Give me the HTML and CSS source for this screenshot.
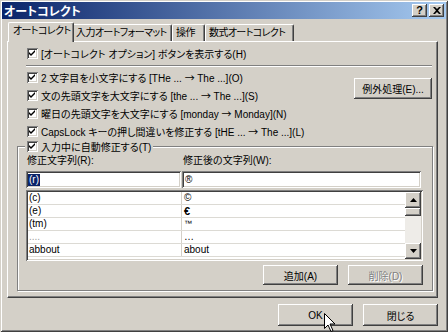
FILE: index.html
```html
<!DOCTYPE html>
<html lang="ja">
<head>
  <meta charset="UTF-8">
  <title>オートコレクト</title>
  <link rel="stylesheet" href="styles.css">
</head>
<body>
<div class="window">
  <div class="titlebar">
    <span class="title">オートコレクト</span>
    <div class="tb-btns">
      <span class="tb-btn help">?</span>
      <span class="tb-btn close">
        <svg width="8" height="7" viewBox="0 0 8 7"><path d="M0 0h2l2 2 2-2h2L5 3.5 8 7H6L4 5 2 7H0l3-3.5z" fill="#000"/></svg>
      </span>
    </div>
  </div>

  <div class="content">
    <div class="tabs">
      <div class="tab active t1">オートコレクト</div>
      <div class="tab t2">入力オートフォーマット</div>
      <div class="tab t3">操作</div>
      <div class="tab t4">数式オートコレクト</div>
    </div>

    <div class="panel">
      <div class="row top-row">
        <span class="chk"></span>
        <span>[オートコレクト オプション] ボタンを表示する(H)</span>
      </div>
      <div class="sep"></div>

      <div class="opts">
        <div class="opt-list">
          <div class="row"><span class="chk"></span><span>2 文字目を小文字にする [THe ... <span class="ar">→</span> The ...](O)</span></div>
          <div class="row"><span class="chk"></span><span>文の先頭文字を大文字にする [the ... <span class="ar">→</span> The ...](S)</span></div>
          <div class="row"><span class="chk"></span><span>曜日の先頭文字を大文字にする [monday <span class="ar">→</span> Monday](N)</span></div>
          <div class="row"><span class="chk"></span><span>CapsLock キーの押し間違いを修正する [tHE ... <span class="ar">→</span> The ...](L)</span></div>
        </div>
        <div class="btn except">例外処理(E)...</div>
      </div>

      <div class="group">
        <div class="legend"><span class="chk"></span><span>入力中に自動修正する(T)</span></div>
        <div class="labels">
          <span class="lbl1">修正文字列(R):</span>
          <span class="lbl2">修正後の文字列(W):</span>
        </div>
        <div class="inputs">
          <div class="field f1"><span class="selected">(r)</span></div>
          <div class="field f2">®</div>
        </div>
        <div class="list">
          <div class="rows">
            <div class="lrow"><span class="c1">(c)</span><span class="c2">©</span></div>
            <div class="lrow"><span class="c1">(e)</span><span class="c2 euro">€</span></div>
            <div class="lrow"><span class="c1">(tm)</span><span class="c2 small">™</span></div>
            <div class="lrow"><span class="c1 dots">....</span><span class="c2">…</span></div>
            <div class="lrow"><span class="c1">abbout</span><span class="c2">about</span></div>
          </div>
          <div class="scrollbar">
            <div class="sb-btn">
              <svg width="7" height="4" viewBox="0 0 7 4"><path d="M3.5 0L7 4H0z" fill="#000"/></svg>
            </div>
            <div class="sb-thumb"></div>
            <div class="sb-track"></div>
            <div class="sb-btn">
              <svg width="7" height="4" viewBox="0 0 7 4"><path d="M0 0h7L3.5 4z" fill="#000"/></svg>
            </div>
          </div>
        </div>
        <div class="group-btns">
          <div class="btn">追加(A)</div>
          <div class="btn disabled">削除(D)</div>
        </div>
      </div>
    </div>

    <div class="footer">
      <div class="btn foot">OK</div>
      <div class="btn foot">閉じる</div>
    </div>
  </div>

  <svg class="cursor" width="12" height="19" viewBox="0 0 12 19">
    <path d="M0.5 0.5v15l3.5-3.5 3 6.5 2-1-3-6.5h5z" fill="#fff" stroke="#000" stroke-width="1"/>
  </svg>
</div>
</body>
</html>
```

FILE: styles.css
```css
* {
  box-sizing: border-box;
}

body {
  margin: 0;
  background: #d4d0c8;
  font-family: "Liberation Sans", "Noto Sans CJK JP", sans-serif;
  font-size: 10px;
  font-feature-settings: "palt";
  color: #000;
}

.window {
  position: relative;
  width: 448px;
  height: 332px;
  padding: 2px;
  background: #d4d0c8;
  box-shadow: inset 1px 1px #d4d0c8, inset -1px -1px #404040,
              inset 2px 2px #fff, inset -2px -2px #808080;
}

.titlebar {
  display: flex;
  align-items: center;
  justify-content: space-between;
  height: 17px;
  padding: 0 2px 0 2px;
  background: linear-gradient(to right, #0a246a, #a6caf0);
  color: #fff;
}

.title {
  font-family: "Noto Sans CJK JP", sans-serif;
  font-weight: bold;
  font-size: 12px;
  line-height: 17px;
}

.tb-btns {
  display: flex;
  gap: 2px;
}

.tb-btn {
  display: flex;
  align-items: center;
  justify-content: center;
  width: 15px;
  height: 13px;
  background: #d4d0c8;
  color: #000;
  box-shadow: inset -1px -1px #404040, inset 1px 1px #fff,
              inset -2px -2px #808080;
}

.help {
  font-weight: bold;
  font-size: 11px;
  line-height: 13px;
}

.content {
  padding: 3px 8px 0 5px;
}

/* tabs */
.tabs {
  display: flex;
  align-items: flex-end;
  height: 19px;
  padding-left: 3px;
}

.tab {
  height: 17px;
  line-height: 16px;
  padding-left: 3px;
  white-space: nowrap;
  letter-spacing: -0.6px;
  border-top: 1px solid #fff;
  border-left: 1px solid #fff;
  border-right: 1px solid #404040;
  border-radius: 2px 2px 0 0;
  box-shadow: inset -1px 0 #808080;
}

.tab.active {
  position: relative;
  z-index: 1;
  height: 20px;
  margin: 0 -2px -1px -2px;
  padding-left: 4px;
  background: #d4d0c8;
}

.t1 { width: 66px; }
.t2 { width: 100px; }
.t3 { width: 33px; }
.t4 { width: 89px; }

.panel {
  height: 257px;
  padding-top: 3px;
  border-top: 1px solid #fff;
  border-left: 1px solid #fff;
  border-right: 1px solid #404040;
  border-bottom: 1px solid #404040;
  box-shadow: inset -1px -1px #808080;
}

.row {
  display: flex;
  align-items: center;
  gap: 3px;
  height: 18px;
  padding-left: 19px;
  white-space: nowrap;
}

.top-row {
  height: 16px;
}

.ar {
  font-family: "Noto Sans CJK JP", sans-serif;
  font-feature-settings: normal;
}

.chk {
  display: inline-block;
  flex: none;
  width: 11px;
  height: 11px;
  background: #fff url("data:image/svg+xml,%3Csvg xmlns='http://www.w3.org/2000/svg' width='11' height='11'%3E%3Cpath d='M2 4l2 2 4-4v2l-4 4-2-2z' fill='%23000'/%3E%3C/svg%3E") no-repeat;
  box-shadow: inset 1px 1px #808080, inset -1px -1px #fff,
              inset 2px 2px #404040, inset -2px -2px #d4d0c8;
}

.sep {
  height: 2px;
  margin: 4px 5px 0 18px;
  border-top: 1px solid #808080;
  border-bottom: 1px solid #fff;
}

.opts {
  display: flex;
  margin-top: 1px;
}

.opt-list {
  flex: 1;
}

.btn {
  display: flex;
  align-items: center;
  justify-content: center;
  width: 75px;
  height: 20px;
  white-space: nowrap;
  background: #d4d0c8;
  box-shadow: inset -1px -1px #404040, inset 1px 1px #fff,
              inset -2px -2px #808080;
}

.except {
  width: 78px;
  height: 21px;
  margin: 10px 5px 0 0;
}

.btn.disabled {
  color: #808080;
  text-shadow: 1px 1px #fff;
}

/* group box */
.group {
  height: 145px;
  margin: 6px 4px 0 9px;
  padding: 0 9px 0 8px;
  border: 1px solid #808080;
  box-shadow: inset 1px 1px #fff, 1px 1px #fff;
}

.legend {
  display: flex;
  align-items: center;
  gap: 3px;
  width: max-content;
  height: 12px;
  margin: -7px 0 0 -1px;
  padding: 0 2px;
  background: #d4d0c8;
}

.labels {
  display: flex;
  height: 14px;
  margin-top: 2px;
  line-height: 14px;
}

.lbl1 {
  width: 155px;
  padding-left: 1px;
}

.lbl2 {
  padding-left: 2px;
}

.inputs {
  display: flex;
  gap: 1px;
  margin-top: 3px;
}

.field {
  display: flex;
  align-items: center;
  height: 17px;
  padding-left: 2px;
  background: #fff;
  box-shadow: inset 1px 1px #808080, inset -1px -1px #fff,
              inset 2px 2px #404040, inset -2px -2px #d4d0c8;
}

.f1 { width: 155px; }
.f2 { width: 239px; padding-left: 3px; }

.selected {
  padding: 0 1px;
  background: #0a246a;
  color: #fff;
  line-height: 12px;
}

.list {
  display: flex;
  height: 71px;
  margin-top: 2px;
  padding: 2px;
  background: #fff;
  box-shadow: inset 1px 1px #808080, inset -1px -1px #fff,
              inset 2px 2px #404040, inset -2px -2px #d4d0c8;
}

.rows {
  flex: 1;
}

.lrow {
  display: flex;
  height: 13px;
  line-height: 12px;
  border-bottom: 1px solid #dcdad4;
}

.c1 {
  width: 154px;
  padding-left: 1px;
  border-right: 1px solid #d4d0c8;
}

.c2 {
  padding-left: 2px;
}

.euro {
  font-weight: bold;
  font-size: 11px;
}

.small {
  font-size: 8px;
}

.dots {
  color: #a0a0a0;
}

.scrollbar {
  display: flex;
  flex-direction: column;
  width: 16px;
}

.sb-btn {
  display: flex;
  align-items: center;
  justify-content: center;
  height: 16px;
  background: #d4d0c8;
  box-shadow: inset -1px -1px #404040, inset 1px 1px #fff,
              inset -2px -2px #808080;
}

.sb-thumb {
  height: 8px;
  background: #d4d0c8;
  box-shadow: inset -1px -1px #404040, inset 1px 1px #fff,
              inset -2px -2px #808080;
}

.sb-track {
  flex: 1;
  background: #eeece8;
}

.group-btns {
  display: flex;
  justify-content: flex-end;
  gap: 10px;
  margin-top: 4px;
}

.footer {
  display: flex;
  justify-content: flex-end;
  gap: 10px;
  margin-top: 6px;
}

.foot {
  height: 22px;
}

.cursor {
  position: absolute;
  left: 324px;
  top: 313px;
}
```
